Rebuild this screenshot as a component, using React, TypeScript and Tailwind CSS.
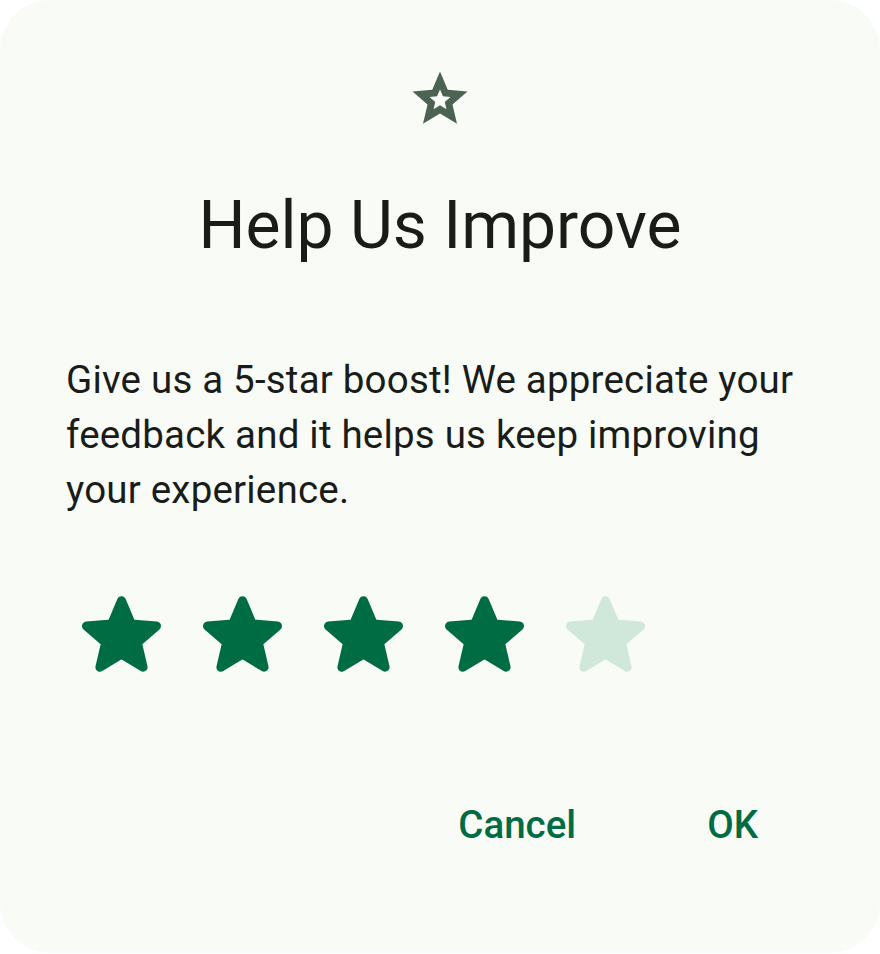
const STAR_POINTS =
    '39.5,57.9 61.1,71 55.4,46.4 74.5,29.8 49.3,27.7 39.5,4.5 29.7,27.7 4.5,29.8 23.6,46.4 17.9,71';

const RatingStar = ({ filled }: { filled: boolean }) => {
    const color = filled ? '#006c43' : '#cfe8d9';
    return (
        <svg width={79} height={76} viewBox="0 0 79 75.5">
            <polygon points={STAR_POINTS} fill={color} stroke={color} strokeWidth={9} strokeLinejoin="round" />
        </svg>
    );
};

const OutlineStar = () => (
    <svg width={66} height={66} viewBox="0 0 24 24">
        <path
            fillRule="evenodd"
            fill="#4c6354"
            d="M12 17.27L18.18 21l-1.64-7.03L22 9.24l-7.19-.61L12 2 9.19 8.63 2 9.24l5.46 4.73L5.82 21z M12 14.31L14.35 15.73 13.73 13.06 15.8 11.26 13.07 11.03 12 8.51 10.93 11.03 8.2 11.26 10.28 13.06 9.65 15.73z"
        />
    </svg>
);

const App = () => {
    const rating = 4;
    return (
        <div className="w-[880px] h-[954px] bg-white" style={{ fontFamily: 'Roboto, "Noto Sans", sans-serif' }}>
            <div className="h-[953px] rounded-[50px] bg-[#f9fcf6] flex flex-col px-[66px] pt-[66px]">
                <div className="flex justify-center">
                    <OutlineStar />
                </div>
                <h2 className="mt-[50px] text-center text-[66px] leading-[88px] text-[#1a1c19]">
                    Help Us Improve
                </h2>
                <p className="mt-[82px] text-[38.5px] leading-[55px] tracking-[0.2px] text-[#1a1c19]">
                    Give us a 5-star boost! We appreciate your feedback and it helps us keep improving your experience.
                </p>
                <div className="mt-[79px] pl-[16px] flex gap-[42px]">
                    {[1, 2, 3, 4, 5].map((n) => (
                        <RatingStar key={n} filled={n <= rating} />
                    ))}
                </div>
                <div className="mt-[125px] flex justify-end gap-[65px] mr-[23px]">
                    <button className="px-[33px] text-[38.5px] leading-[55px] font-medium text-[#006c43]">
                        Cancel
                    </button>
                    <button className="px-[33px] text-[38.5px] leading-[55px] font-medium text-[#006c43]">
                        OK
                    </button>
                </div>
            </div>
        </div>
    );
};

export default App;
